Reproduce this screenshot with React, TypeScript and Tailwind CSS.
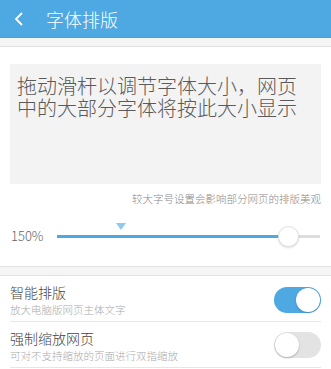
import React from "react";

export default function App() {
  const font = { fontFamily: '"Noto Sans CJK SC", "Noto Sans", sans-serif' };
  return (
    <div className="w-[331px] h-[369px] overflow-hidden bg-white font-light" style={font}>
      {/* Header */}
      <div className="h-[38px] bg-[#4ea8e2] flex items-center border-b border-[#4a9fd6]">
        <svg width="10" height="16" viewBox="0 0 10 16" className="ml-[14px]">
          <path d="M8 2 L2 8 L8 14" stroke="white" strokeWidth="1.8" fill="none" />
        </svg>
        <span className="ml-[22px] text-white text-[18px] leading-none">字体排版</span>
      </div>
      <div className="h-[9px] bg-[#f5f5f5] border-b border-[#e2e2e2]" />

      {/* Preview box */}
      <div className="px-[10px] pt-[17px]">
        <div className="h-[120px] bg-[#f3f3f3] px-[7px] pt-[11px] text-[20px] leading-[22px] text-[#5a5a5a]">
          拖动滑杆以调节字体大小，网页中的大部分字体将按此大小显示
        </div>
        <div className="mt-[8px] text-right text-[10.5px] leading-[14px] text-[#888]">
          较大字号设置会影响部分网页的排版美观
        </div>
      </div>

      {/* Slider */}
      <div className="flex items-center h-[60px] px-[11px]">
        <span className="text-[13px] text-[#666] w-[46px]">150%</span>
        <div className="relative flex-1 h-[3px] bg-[#dddddd]">
          <div className="absolute left-0 top-0 h-[3px] w-[231px] bg-[#4ea8e2]" />
          <div className="absolute left-[59px] top-[-12px] w-0 h-0 border-l-[5px] border-r-[5px] border-t-[7px] border-l-transparent border-r-transparent border-t-[#8ccbef]" />
          <div className="absolute left-[221px] top-[-9px] w-[21px] h-[21px] rounded-full bg-white border border-[#e2e2e2] shadow-[0_1px_2px_rgba(0,0,0,0.15)]" />
        </div>
      </div>

      <div className="h-[10px] bg-[#f5f5f5] border-t border-b border-[#e2e2e2]" />

      {/* Rows */}
      <div className="px-[10px]">
        <div className="flex items-start h-[46px] border-b border-[#e6e6e6]">
          <div className="flex-1 pt-[7px]">
            <div className="text-[14px] leading-[18px] text-[#444]">智能排版</div>
            <div className="text-[10.5px] leading-[14px] text-[#aaa] mt-[2px]">放大电脑版网页主体文字</div>
          </div>
          <div className="mt-[11px] w-[47px] h-[26px] rounded-full bg-[#4ea8e2] relative">
            <div className="absolute right-[1px] top-[1px] w-[24px] h-[24px] rounded-full bg-white shadow-[0_1px_2px_rgba(0,0,0,0.2)]" />
          </div>
        </div>
        <div className="flex items-start h-[46px] border-b border-[#e6e6e6]">
          <div className="flex-1 pt-[7px]">
            <div className="text-[14px] leading-[18px] text-[#444]">强制缩放网页</div>
            <div className="text-[10.5px] leading-[14px] text-[#aaa] mt-[2px]">可对不支持缩放的页面进行双指缩放</div>
          </div>
          <div className="mt-[10px] w-[47px] h-[26px] rounded-full bg-[#e3e3e3] relative">
            <div className="absolute left-[1px] top-[1px] w-[24px] h-[24px] rounded-full bg-white shadow-[0_1px_2px_rgba(0,0,0,0.25)]" />
          </div>
        </div>
      </div>
    </div>
  );
}
